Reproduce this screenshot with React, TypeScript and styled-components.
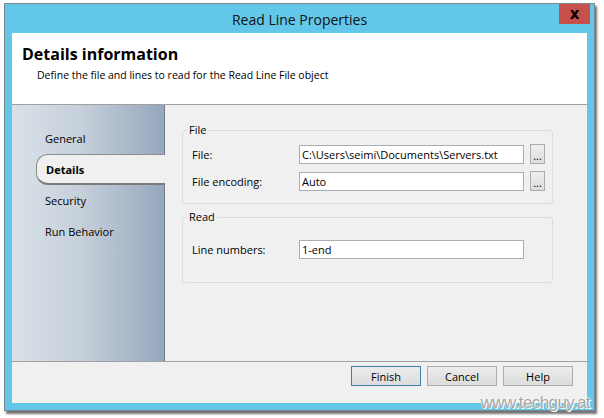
import React from "react";
import styled, { createGlobalStyle } from "styled-components";

const GlobalStyle = createGlobalStyle`
  body {
    margin: 0;
    background: #ffffff;
    font-family: "Open Sans", "Noto Sans", sans-serif;
    color: #000;
  }
`;

const Page = styled.div`
  padding: 3px 0 0 4px;
  position: relative;
  width: 604px;
  height: 418px;
  box-sizing: border-box;
`;

const Window = styled.div`
  width: 591px;
  height: 408px;
  box-sizing: border-box;
  border: 1px solid #7c868d;
  background: #62c7e8;
  padding: 0 7px 7px 7px;
  display: flex;
  flex-direction: column;
  box-shadow: 2px 3px 2px rgba(0, 0, 0, 0.55);
`;

const TitleBar = styled.div`
  height: 29px;
  display: grid;
  grid-template-columns: 1fr auto 1fr;
  align-items: center;
`;

const Title = styled.div`
  grid-column: 2;
  font-size: 14px;
  color: #111;
  padding-top: 1px;
`;

const Close = styled.button`
  grid-column: 3;
  justify-self: end;
  align-self: start;
  margin-right: -3px;
  width: 31px;
  height: 20px;
  border: none;
  background: #c7504b;
  color: #000;
  font-family: "DejaVu Sans", sans-serif;
  font-weight: bold;
  font-size: 15px;
  line-height: 17px;
  padding: 0;
`;

const Panel = styled.div`
  flex: 1;
  background: #f0f0f0;
  display: flex;
  flex-direction: column;
`;

const Header = styled.div`
  background: #fff;
  border-bottom: 1px solid #a0a0a0;
  padding: 10px 0 0 10px;
  box-sizing: content-box;
  height: 61px;
`;

const Heading = styled.h1`
  margin: 0;
  font-size: 16px;
  font-weight: bold;
  line-height: 22px;
`;

const Sub = styled.p`
  margin: 3px 0 0 15px;
  font-size: 10.5px;
  line-height: 14px;
`;

const Main = styled.div`
  flex: 1;
  display: flex;
`;

const Sidebar = styled.nav`
  width: 152px;
  border-right: 1px solid #6f7c8b;
  background: linear-gradient(to right, #dae1e8, #c6d0db 45%, #96a7bc);
  padding-top: 18px;
  display: flex;
  flex-direction: column;
`;

const NavItem = styled.div<{ active?: boolean }>`
  height: 31px;
  box-sizing: border-box;
  margin-left: 24px;
  padding-left: 9px;
  display: flex;
  align-items: center;
  font-size: 11px;
  font-weight: ${({ active }) => (active ? "bold" : "normal")};
  position: relative;
  ${({ active }) =>
    active &&
    `
    background: #f0f0f0;
    border: 1px solid #8d8d8d;
    border-right: none;
    border-bottom: 2px solid #7a7a7a;
    border-radius: 12px 0 0 12px;
    margin-right: -1px;
    z-index: 1;
  `}
`;

const Content = styled.div`
  flex: 1;
  padding: 18px 0 0 17px;
  display: flex;
  flex-direction: column;
  gap: 6px;
`;

const Group = styled.fieldset<{ pt: number; pb: number }>`
  margin: 0;
  width: 371px;
  box-sizing: border-box;
  border: 1px solid #d9dde2;
  border-radius: 3px;
  padding: ${({ pt, pb }) => `${pt}px 0 ${pb}px 9px`};
  display: flex;
  flex-direction: column;
  gap: 7px;
`;

const Legend = styled.legend`
  font-size: 11px;
  line-height: 14px;
  padding: 0 2px;
  margin-left: -5px;
`;

const Row = styled.div`
  display: grid;
  grid-template-columns: 101px 225px 15px;
  column-gap: 6px;
  align-items: center;
`;

const Label = styled.span`
  font-size: 11px;
`;

const Field = styled.div`
  height: 19px;
  box-sizing: border-box;
  border: 1px solid #abadb3;
  background: #fff;
  font-size: 11px;
  line-height: 17px;
  padding-left: 2px;
  white-space: nowrap;
  overflow: hidden;
`;

const Browse = styled.button`
  width: 15px;
  height: 20px;
  box-sizing: border-box;
  border: 1px solid #acacac;
  background: linear-gradient(#eeeeee, #dddddd);
  padding: 0;
  font-size: 11px;
  line-height: 22px;
  color: #000;
  font-family: inherit;
`;

const Footer = styled.div`
  height: 42px;
  border-top: 1px solid #a0a0a0;
  padding: 4px 14px 0 0;
  box-sizing: border-box;
  display: flex;
  justify-content: flex-end;
  gap: 6px;
`;

const Button = styled.button<{ primary?: boolean }>`
  width: 70px;
  height: 20px;
  box-sizing: border-box;
  border: 1px solid ${({ primary }) => (primary ? "#3c7fb1" : "#acacac")};
  background: linear-gradient(#ececec, #dcdcdc);
  font-family: inherit;
  font-size: 11px;
  color: #000;
  padding: 0;
`;

const Watermark = styled.div`
  position: absolute;
  right: 14px;
  bottom: 5px;
  font-family: "Liberation Sans", sans-serif;
  font-size: 17px;
  letter-spacing: -0.6px;
  color: #a5a5a5;
  text-shadow: 0 0 1px #fff, 0 0 1px #fff, 1px 1px 0 #fff;
`;

const navItems = ["General", "Details", "Security", "Run Behavior"];

export default function App() {
  return (
    <Page>
      <GlobalStyle />
      <Window>
        <TitleBar>
          <Title>Read Line Properties</Title>
          <Close>x</Close>
        </TitleBar>
        <Panel>
          <Header>
            <Heading>Details information</Heading>
            <Sub>Define the file and lines to read for the Read Line File object</Sub>
          </Header>
          <Main>
            <Sidebar>
              {navItems.map((item) => (
                <NavItem key={item} active={item === "Details"}>
                  {item}
                </NavItem>
              ))}
            </Sidebar>
            <Content>
              <Group pt={7} pb={12}>
                <Legend>File</Legend>
                <Row>
                  <Label>File:</Label>
                  <Field>C:\Users\seimi\Documents\Servers.txt</Field>
                  <Browse>...</Browse>
                </Row>
                <Row>
                  <Label>File encoding:</Label>
                  <Field>Auto</Field>
                  <Browse>...</Browse>
                </Row>
              </Group>
              <Group pt={16} pb={23}>
                <Legend>Read</Legend>
                <Row>
                  <Label>Line numbers:</Label>
                  <Field>1-end</Field>
                </Row>
              </Group>
            </Content>
          </Main>
          <Footer>
            <Button primary>Finish</Button>
            <Button>Cancel</Button>
            <Button>Help</Button>
          </Footer>
        </Panel>
      </Window>
      <Watermark>www.techguy.at</Watermark>
    </Page>
  );
}
